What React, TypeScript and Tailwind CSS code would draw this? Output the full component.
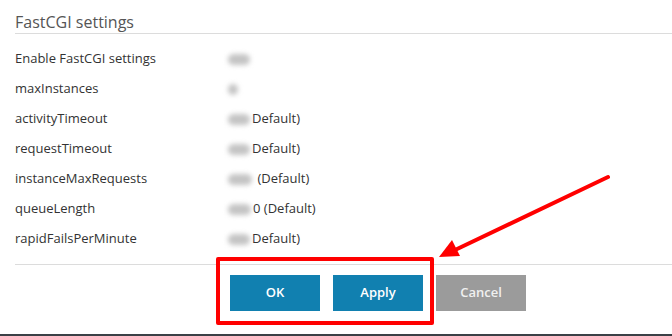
import React from "react";

const rows: { label: string; blob: number; text?: string }[] = [
  { label: "Enable FastCGI settings", blob: 22 },
  { label: "maxInstances", blob: 10 },
  { label: "activityTimeout", blob: 22, text: "Default)" },
  { label: "requestTimeout", blob: 22, text: "Default)" },
  { label: "instanceMaxRequests", blob: 24, text: "\u00a0(Default)" },
  { label: "queueLength", blob: 23, text: "0 (Default)" },
  { label: "rapidFailsPerMinute", blob: 22, text: "Default)" },
];

export default function App() {
  return (
    <div
      className="relative w-[672px] h-[336px] bg-white overflow-hidden"
      style={{ fontFamily: '"Open Sans", "Liberation Sans", sans-serif' }}
    >
      <div className="pl-[15px]">
        <div className="h-[34px] border-b border-[#dcdcdc] text-[16px] leading-[20px] text-[#555] pt-[12px]">
          FastCGI settings
        </div>
        <div className="pt-[10px] pb-[10px] border-b border-[#dcdcdc]">
          {rows.map((r) => (
            <div key={r.label} className="flex items-center h-[30px] text-[13px] text-[#333]">
              <div className="w-[213px]">{r.label}</div>
              <div className="flex items-center">
                <div
                  className="h-[11px] rounded-full bg-[#c4c4c4] blur-[2.5px] mr-[2px]"
                  style={{ width: r.blob }}
                />
                {r.text && <span>{r.text}</span>}
              </div>
            </div>
          ))}
        </div>
        <div className="flex pl-[215px] pt-[10px] gap-[13px]">
          <button className="w-[90px] h-[36px] bg-[#1180b0] text-white text-[13px] font-semibold">
            OK
          </button>
          <button className="w-[90px] h-[36px] bg-[#1180b0] text-white text-[13px] font-semibold">
            Apply
          </button>
          <button className="w-[90px] h-[36px] bg-[#9b9b9b] text-[#f0f0f0] text-[13px] font-semibold">
            Cancel
          </button>
        </div>
      </div>
      <div className="absolute left-0 right-0 bottom-0 h-[2px] bg-[#3b4046]" />
      <div className="absolute left-[216px] top-[257px] w-[218px] h-[68px] border-[4px] border-[#ff0000] rounded-[2px]" />
      <svg className="absolute left-0 top-0" width="672" height="336">
        <line x1="608" y1="177" x2="455" y2="250" stroke="#ff0000" strokeWidth="4" strokeLinecap="round" />
        <polygon points="439,257 452,240 460,256" fill="#ff0000" />
      </svg>
    </div>
  );
}
